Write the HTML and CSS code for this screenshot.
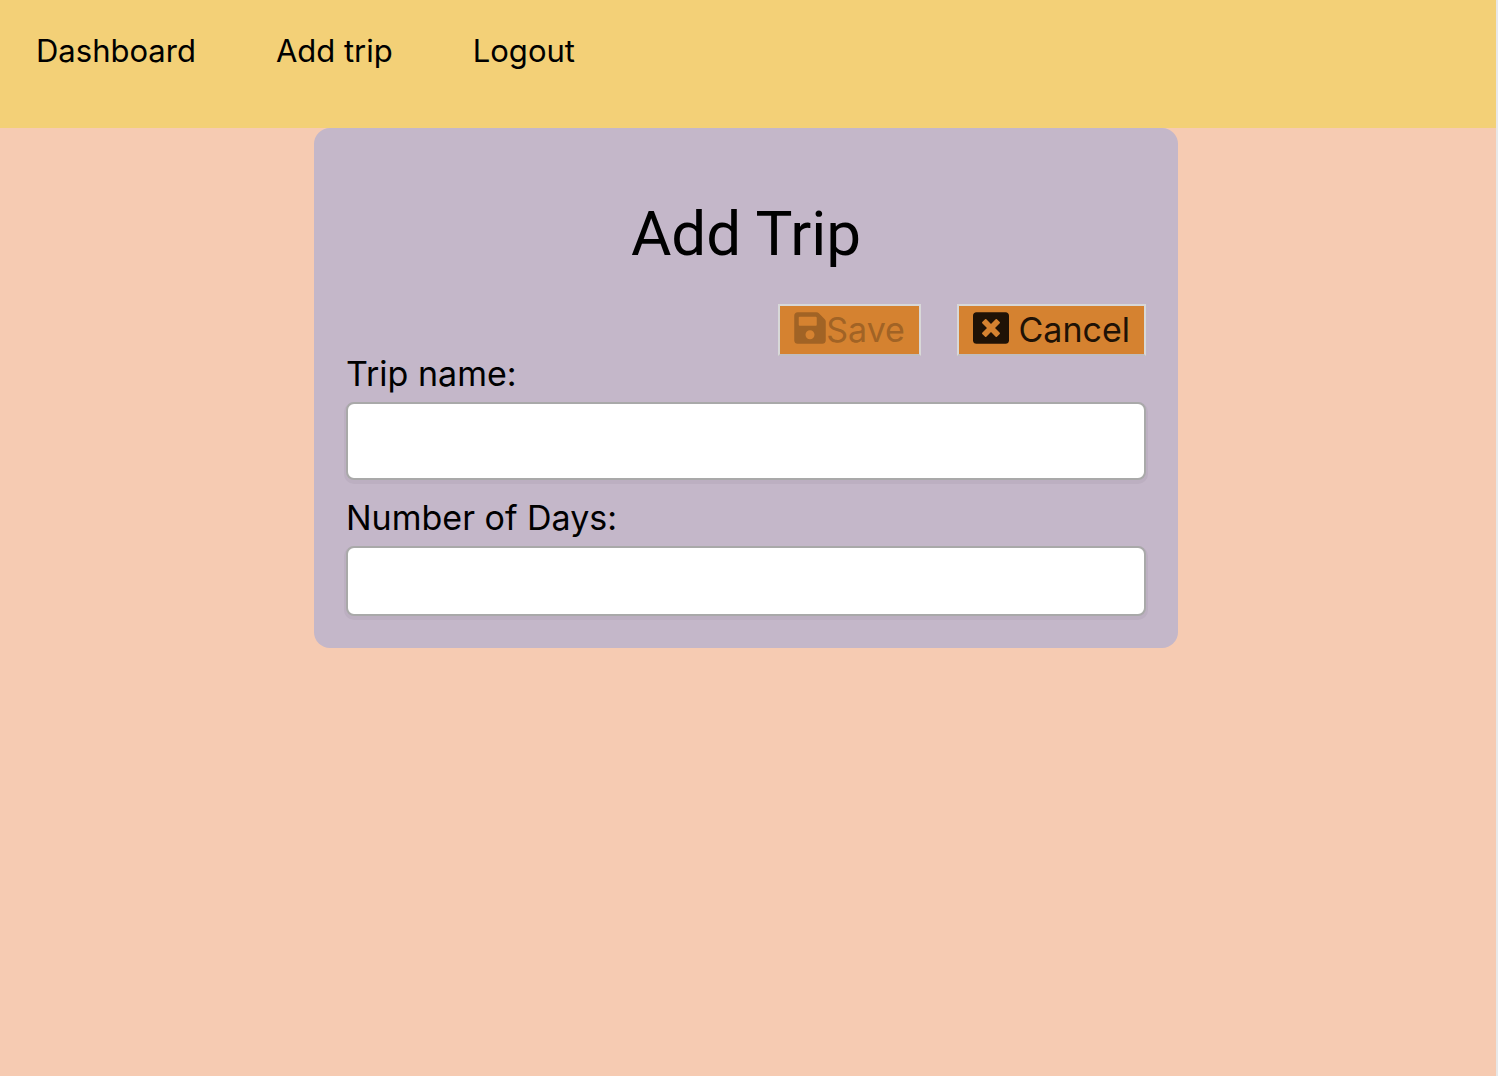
FILE: index.html
```html
<!DOCTYPE html>
<html lang="en">
<head>
<meta charset="utf-8">
<meta name="viewport" content="width=device-width, initial-scale=1">
<title>Add Trip</title>
<link rel="stylesheet" href="styles.css">
</head>
<body>
<nav class="nav">
  <a class="nav-link" href="#dashboard">Dashboard</a>
  <a class="nav-link" href="#add">Add trip</a>
  <a class="nav-link" href="#logout">Logout</a>
</nav>
<main class="page">
  <section class="card">
    <h1 class="title">Add Trip</h1>
    <form class="form">
      <div class="actions">
        <button class="button" type="submit" disabled><svg class="icon icon-save" viewBox="0 0 448 512" aria-hidden="true"><path d="M433.941 129.941l-83.882-83.882A48 48 0 0 0 316.118 32H48C21.49 32 0 53.49 0 80v352c0 26.51 21.49 48 48 48h352c26.51 0 48-21.49 48-48V163.882a48 48 0 0 0-14.059-33.941zM224 416c-35.346 0-64-28.654-64-64 0-35.346 28.654-64 64-64s64 28.654 64 64c0 35.346-28.654 64-64 64zm96-304.52V212c0 6.627-5.373 12-12 12H76c-6.627 0-12-5.373-12-12V108c0-6.627 5.373-12 12-12h228.520c3.183 0 6.235 1.264 8.485 3.515l3.480 3.480A11.996 11.996 0 0 1 320 111.480z"/></svg>Save</button>
        <button class="button" type="button"><svg class="icon icon-cancel" viewBox="0 0 512 512" aria-hidden="true"><path d="M464 32H48C21.5 32 0 53.5 0 80v352c0 26.500 21.500 48 48 48h416c26.500 0 48-21.500 48-48V80c0-26.500-21.500-48-48-48zm-83.600 290.500c4.800 4.800 4.800 12.600 0 17.400l-40.500 40.500c-4.800 4.800-12.600 4.800-17.400 0L256 313.300l-66.500 67.100c-4.800 4.800-12.600 4.800-17.400 0l-40.500-40.500c-4.800-4.800-4.800-12.600 0-17.400l67.100-66.500-67.100-66.500c-4.800-4.800-4.800-12.600 0-17.400l40.500-40.500c4.800-4.800 12.600-4.800 17.400 0l66.500 67.100 66.500-67.100c4.800-4.800 12.600-4.800 17.400 0l40.500 40.500c4.800 4.800 4.800 12.600 0 17.400L313.300 256l67.100 66.500z"/></svg> Cancel</button>
      </div>
      <label class="label" for="trip-name">Trip name:</label>
      <input class="field field-name" id="trip-name" type="text">
      <label class="label" for="days">Number of Days:</label>
      <input class="field field-days" id="days" type="number">
    </form>
  </section>
</main>
</body>
</html>
```
FILE: styles.css
```css
* {
  box-sizing: border-box;
}

body {
  margin: 0;
  min-height: 100vh;
  border-right: 2px solid #e8e8e8;
  background: #f6cbb2;
  color: #000;
  font-family: Inter, "Liberation Sans", sans-serif;
}

.nav {
  display: flex;
  gap: 80px;
  min-height: 128px;
  padding: 32px 36px;
  background: #f3d077;
}

.nav-link {
  color: inherit;
  font-size: 31px;
  line-height: 38px;
  text-decoration: none;
}

.page {
  padding-right: 4px;
}

.card {
  width: 864px;
  max-width: 100%;
  margin: 0 auto;
  padding: 64px 32px 32px;
  border-radius: 16px;
  background: #c4b7c9;
}

.title {
  margin: 0 0 28px;
  font-family: Roboto, "Liberation Sans", sans-serif;
  font-size: 62px;
  font-weight: 400;
  line-height: 84px;
  text-align: center;
}

.form {
  display: flex;
  flex-direction: column;
}

.actions {
  display: flex;
  justify-content: flex-end;
  gap: 36px;
}

.button {
  display: flex;
  align-items: flex-start;
  height: 52px;
  padding: 4px 14px;
  border: 2px solid #d8d8d8;
  border-bottom-color: #c0bcc0;
  background: #d58230;
  color: #1f1206;
  font: inherit;
  font-size: 34px;
  line-height: 40px;
  white-space: pre;
}

.button:disabled {
  color: #a16325;
}

.icon {
  height: 36px;
  fill: currentColor;
}

.icon-save {
  width: 32px;
}

.icon-cancel {
  width: 36px;
}

.label {
  font-size: 34px;
  line-height: 36px;
  margin-bottom: 10px;
}

.field {
  width: 100%;
  height: 70px;
  padding: 0 16px;
  border: 2px solid #a9a9a9;
  border-radius: 8px;
  background: #fff;
  font: inherit;
  font-size: 34px;
  box-shadow: 0 2px 0 2px #bcafc1;
}

.field-name {
  height: 78px;
  margin-bottom: 20px;
}
```
